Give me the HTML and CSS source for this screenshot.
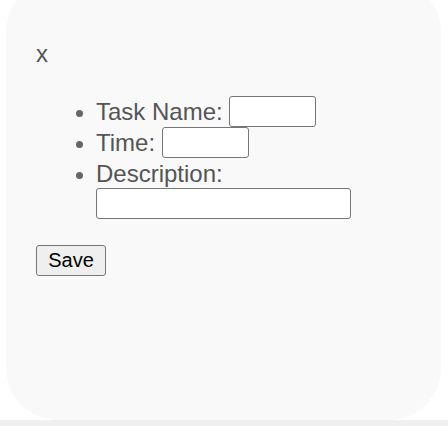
FILE: index.html
```html
<!DOCTYPE html>
<html>
<head>
<meta charset="utf-8">
<link rel="stylesheet" href="styles.css">
</head>
<body>
<div class="screen">
  <div class="modal">
    <div class="close">x</div>
    <ul class="fields">
      <li>Task Name: <input type="text" class="short"></li>
      <li>Time: <input type="text" class="short"></li>
      <li class="desc">Description:<br><input type="text" class="long"></li>
    </ul>
    <button class="save">Save</button>
  </div>
</div>
<div class="strip"></div>
</body>
</html>
```

FILE: styles.css
```css
html, body {
  margin: 0;
  padding: 0;
  background: #ffffff;
  overflow: hidden;
}
.screen {
  height: 420px;
  padding: 0 7px 0 6px;
  overflow: hidden;
  background: #ffffff;
}
.modal {
  box-sizing: border-box;
  margin-top: -20px;
  height: 440px;
  padding: 60px 30px 30px 30px;
  background: #f9f9f9;
  border-radius: 52px;
  font-family: "Liberation Sans", Arial, sans-serif;
  font-size: 24px;
  color: #555555;
}
.close {
  line-height: normal;
}
.fields {
  margin: 28px 0 26px 0;
  padding-left: 60px;
}
.fields li {
  line-height: normal;
}
.fields li::marker {
  color: #666666;
  font-size: 22px;
}
.fields .desc {
  padding-top: 2px;
}
input {
  box-sizing: border-box;
  height: 31px;
  padding: 1px 3px;
  border: 1px solid #767676;
  border-radius: 3px;
  background: #ffffff;
  font-family: "Liberation Sans", Arial, sans-serif;
  font-size: 20px;
  vertical-align: 2px;
}
.short {
  width: 87px;
}
.long {
  width: 255px;
}
.save {
  box-sizing: border-box;
  height: 31px;
  width: 70px;
  padding: 0 9px;
  border: 1px solid #767676;
  border-radius: 3px;
  background: #efefef;
  color: #000000;
  font-family: "Liberation Sans", Arial, sans-serif;
  font-size: 20px;
}
.strip {
  height: 20px;
  background: #f0f0f0;
}
```
